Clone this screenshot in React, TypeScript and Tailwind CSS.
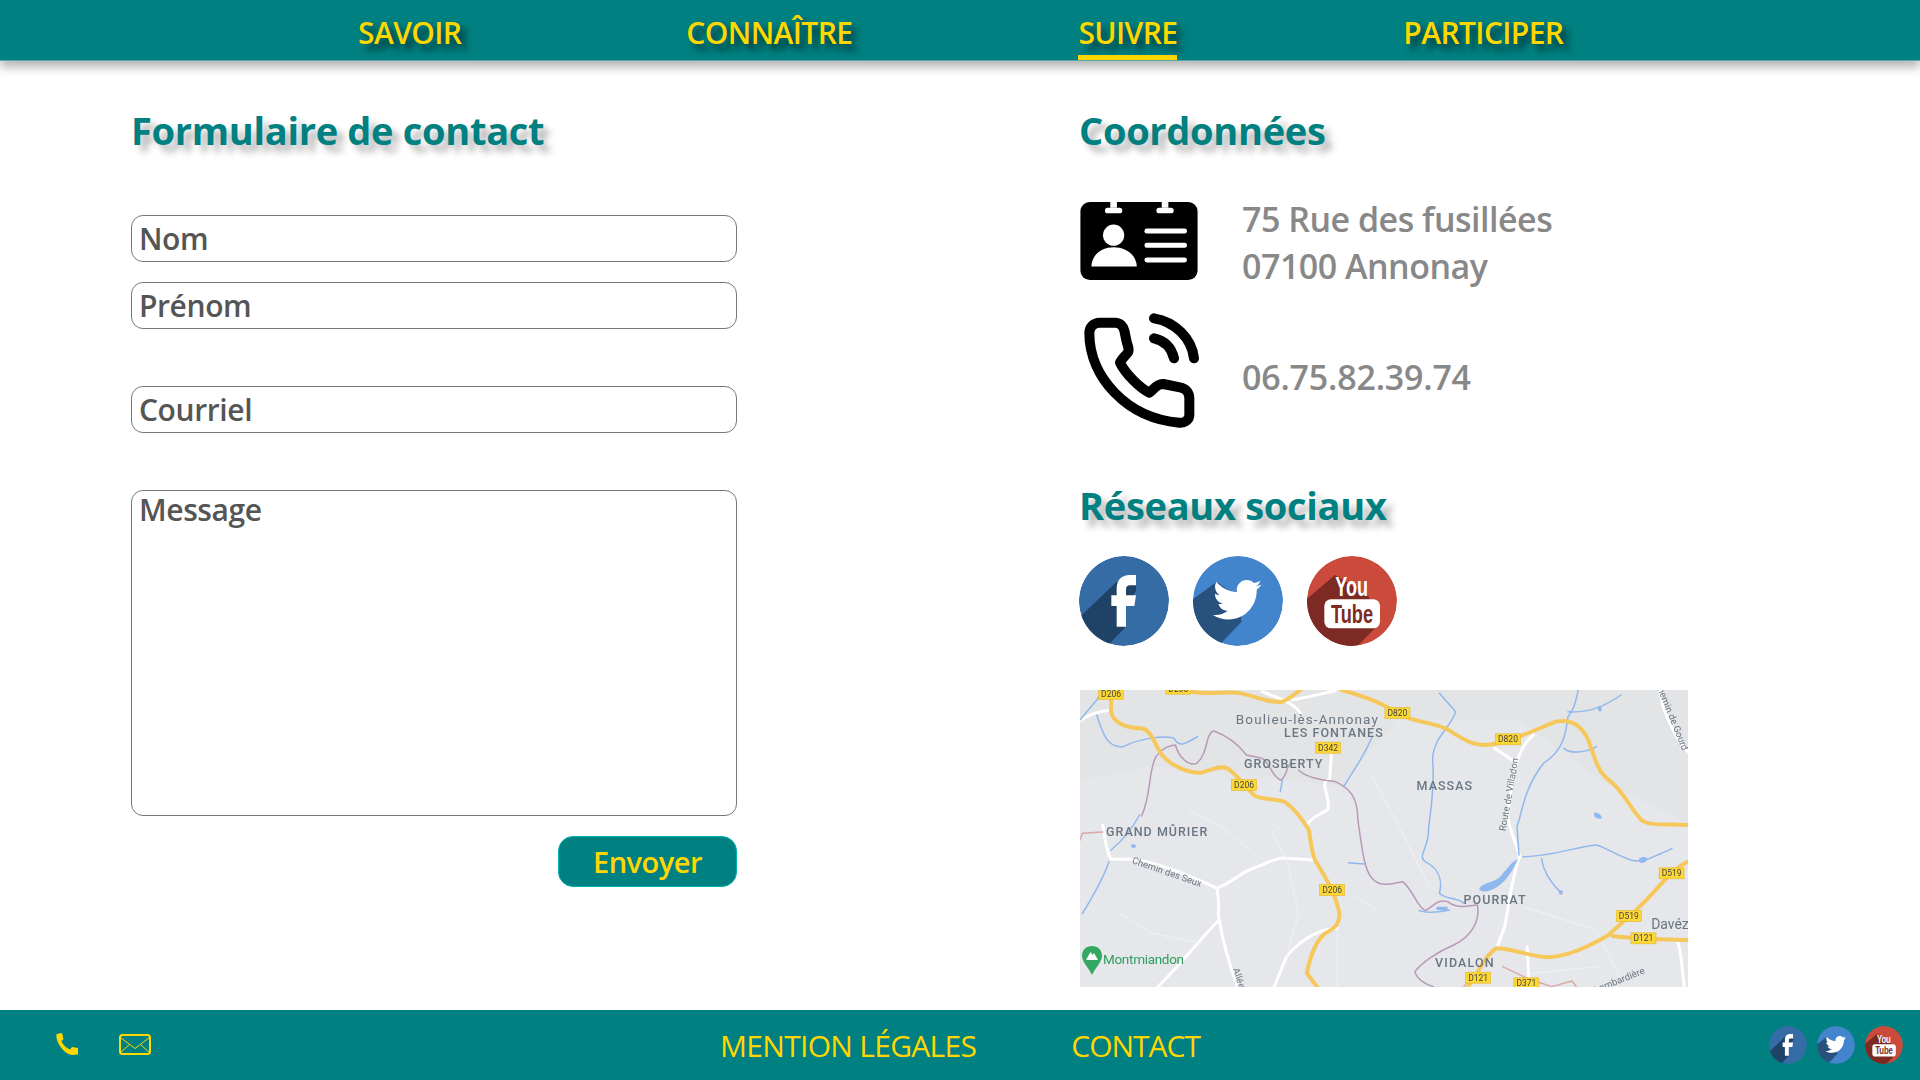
import React from 'react';
import { FaTwitter } from 'react-icons/fa';

const shadowNav = '[text-shadow:6px_6px_7px_rgba(0,0,0,0.6)]';
const font = "font-['Open_Sans','Noto_Sans',sans-serif]";

const mapX = (x: number) => (x - 24) * 0.408;
const mapY = (y: number) => (y - 30) / 3;

const shields: [string, number, number][] = [
  ['D206', 100, 42], ['D820', 802, 99], ['D820', 1073, 178], ['D342', 632, 203],
  ['D206', 426, 315], ['D206', 642, 630], ['D519', 1474, 580], ['D519', 1369, 708],
  ['D121', 1405, 775], ['D121', 1000, 893], ['D371', 1118, 910], ['D206', 265, 26],
];

// text, centre x, centre y, width, size, weight
const places: [string, number, number, number, number, number][] = [
  ['Boulieu-lès-Annonay', 580, 118, 348, 13.5, 400],
  ['LES FONTANES', 645, 158, 242, 12.5, 500],
  ['GROSBERTY', 522, 250, 192, 12.5, 500],
  ['MASSAS', 917, 317, 136, 12.5, 500],
  ['GRAND MÛRIER', 212, 455, 248, 12.5, 500],
  ['POURRAT', 1040, 658, 152, 12.5, 500],
  ['VIDALON', 966, 848, 144, 12.5, 500],
  ['Davéz', 1470, 732, 92, 14, 400],
];

const RoadMap = () => (
  <svg viewBox="0 0 608 297" className="block w-[608px] h-[297px] bg-[#e6e7ea] blur-[0.5px]">
    <g transform="translate(-9.8 -10) scale(0.408 0.3333)" fill="none" strokeLinecap="round" strokeLinejoin="round">
      <path fill="#e1e2e4" d="M24,30 L1514,30 L1514,430 L1300,300 L1100,120 L800,120 L660,320 L420,280 L200,260 L24,300 Z" opacity="0.7" />
      <g stroke="#ffffff" strokeWidth="3">
        <path vectorEffect="non-scaling-stroke" d="M24,122 C50,100 80,92 100,90" />
        <path vectorEffect="non-scaling-stroke" d="M470,35 C510,55 545,65 565,100 M545,60 C590,50 620,40 650,32" />
        <path vectorEffect="non-scaling-stroke" d="M640,225 L636,298 C608,305 638,345 632,388 C620,400 590,410 580,435" />
        <path vectorEffect="non-scaling-stroke" d="M80,435 C85,480 90,520 100,537 L145,538 C200,540 280,580 360,625 C390,610 410,590 430,575 C470,555 510,530 530,535 L595,540" />
        <path vectorEffect="non-scaling-stroke" d="M360,625 C368,680 360,700 365,720 C330,760 260,870 215,920" />
        <path vectorEffect="non-scaling-stroke" d="M365,720 C375,790 395,870 410,920" />
        <path vectorEffect="non-scaling-stroke" d="M1135,165 C1100,200 1085,260 1072,410 C1080,460 1095,500 1102,530 C1080,600 1075,680 1065,740 L1047,800" />
        <path vectorEffect="non-scaling-stroke" d="M1040,205 L1090,245 M1445,30 C1450,90 1480,170 1514,215" />
        <path vectorEffect="non-scaling-stroke" d="M655,745 C620,745 570,770 530,830 L500,920" />
        <path vectorEffect="non-scaling-stroke" d="M1120,800 L1125,920 M1490,790 C1500,830 1500,880 1505,920" />
      </g>
      <g stroke="#f1f2f4" strokeWidth="1">
        <path vectorEffect="non-scaling-stroke" d="M530,420 L495,460 L530,535 L560,700 L530,830 M700,650 L750,690 M1110,680 L1290,750 L1350,900 M655,745 L655,920 M1130,880 L1300,860" />
        <path vectorEffect="non-scaling-stroke" d="M290,390 L370,440 L450,520 M740,290 C790,400 840,520 880,620 M120,700 L200,760 L320,790" />
      </g>
      <g stroke="#8fb8ee" strokeWidth="1.5">
        <path vectorEffect="non-scaling-stroke" d="M65,105 C80,160 90,205 130,200 C170,175 230,165 255,175 C265,205 285,190 312,170" />
        <path vectorEffect="non-scaling-stroke" d="M24,120 L65,60 L80,30" />
        <path vectorEffect="non-scaling-stroke" d="M740,170 C720,230 690,280 670,320 M520,300 L515,335" />
        <path vectorEffect="non-scaling-stroke" d="M905,40 L945,95 C935,140 890,170 888,240 C895,320 880,420 878,450 C880,500 850,530 870,545 C895,560 915,590 905,640 C920,660 945,650 965,670" />
        <path vectorEffect="non-scaling-stroke" d="M1245,30 C1240,60 1235,90 1220,110 C1215,160 1210,210 1160,250 C1110,330 1110,390 1095,440 L1100,525" />
        <path vectorEffect="non-scaling-stroke" d="M1220,95 C1270,100 1310,80 1350,45 M1210,205 C1230,225 1270,215 1290,200" />
        <path vectorEffect="non-scaling-stroke" d="M1110,530 C1180,530 1240,500 1290,495 C1330,510 1370,555 1410,540 C1440,525 1460,515 1475,505" />
        <path vectorEffect="non-scaling-stroke" d="M1155,535 C1160,580 1180,610 1200,635 M682,548 L720,552" />
        <path vectorEffect="non-scaling-stroke" d="M100,510 C130,480 150,450 170,405 M95,545 C80,600 50,660 30,700" />
        <path vectorEffect="non-scaling-stroke" d="M855,692 C880,702 910,695 930,690" />
      </g>
      <path fill="#8fb8ee" d="M1098,538 C1085,565 1075,600 1045,622 C1030,635 1010,640 1002,628 C1005,612 1030,610 1050,595 C1070,570 1080,545 1098,538 Z" />
      <path fill="#8fb8ee" d="M1285,398 C1295,395 1305,410 1302,416 C1290,418 1280,408 1285,398 Z M1395,535 C1412,525 1418,535 1410,545 C1402,552 1392,550 1395,535 Z M1294,80 C1302,75 1306,88 1300,95 C1294,95 1292,88 1294,80 Z M1198,630 L1208,632 L1205,645 L1198,642 Z M150,492 L162,495 L158,505 L150,502 Z M898,680 L925,680 L925,692 L898,690 Z" />
      <g stroke="#b79ab8" strokeWidth="1.5">
        <path vectorEffect="non-scaling-stroke" d="M175,408 C200,340 190,280 210,230 C225,205 245,195 258,195 C265,230 290,260 310,250 C340,220 330,160 352,153 C380,165 410,190 432,225 L470,235 C490,250 495,290 515,300 C530,295 528,265 540,250" />
        <path vectorEffect="non-scaling-stroke" d="M560,270 C580,295 620,300 650,305 C685,325 705,350 705,420 C715,500 720,570 740,595 C760,625 790,610 815,605 C840,630 850,680 870,692 C890,680 900,655 925,665 C945,685 970,680 998,675 C1005,720 985,770 940,795 C900,815 860,850 845,875 C850,900 875,915 890,920" />
      </g>
      <g stroke="#d9a9a6" strokeWidth="1.5">
        <path vectorEffect="non-scaling-stroke" d="M24,480 L30,460 L80,456 M1060,860 L1120,895 L1180,920 L1230,903 L1240,920 M990,880 L965,920" />
      </g>
      <g stroke="#f6c85c" strokeWidth="4">
        <path vectorEffect="non-scaling-stroke" d="M100,40 L100,95 C105,130 140,145 175,145 C200,150 205,190 225,225 C250,260 290,280 320,278 C345,272 365,255 385,265 C405,280 430,320 450,345 C465,360 500,355 525,365 C550,385 570,420 585,450 C590,480 590,510 600,540 C625,590 650,640 660,700 C660,730 650,745 625,760 C595,790 585,850 580,880 L605,920" />
        <path vectorEffect="non-scaling-stroke" d="M300,35 C340,45 370,35 410,38 C450,45 480,70 520,65 C540,55 550,40 565,30" />
        <path vectorEffect="non-scaling-stroke" d="M665,30 C710,45 750,60 790,90 C830,125 880,125 920,145 C950,165 975,195 1020,195 C1070,190 1130,155 1190,125 C1230,115 1255,140 1270,180 C1285,230 1290,270 1320,300 C1355,330 1375,390 1400,420 C1420,440 1470,430 1514,435" />
        <path vectorEffect="non-scaling-stroke" d="M1514,545 C1480,565 1450,610 1420,650 C1390,690 1350,730 1320,765 C1270,800 1220,830 1170,832 C1130,830 1080,805 1045,805 C1020,820 1000,880 975,920" />
        <path vectorEffect="non-scaling-stroke" d="M1330,768 C1390,778 1450,778 1514,780" />
      </g>
    </g>
    {shields.map(([label, x, y], i) => (
      <g key={i}>
        <rect x={mapX(x) - 12.5} y={mapY(y) - 5.5} width="25" height="11" fill="#fdd734" stroke="#e3b62e" strokeWidth="0.6" />
        <text x={mapX(x)} y={mapY(y) + 3} textAnchor="middle" fontSize="8.5" fill="#444" fontFamily="Roboto, sans-serif">{label}</text>
      </g>
    ))}
    {places.map(([label, x, y, w, size, weight], i) => (
      <text
        key={i}
        x={mapX(x)}
        y={mapY(y) + 4.5}
        textAnchor="middle"
        textLength={w * 0.408}
        fontSize={size}
        fontWeight={weight}
        fill="#6a7682"
        fontFamily="Roboto, sans-serif"
      >
        {label}
      </text>
    ))}
    <text transform="translate(86 185) rotate(19)" textAnchor="middle" fontSize="9.5" fill="#6a7682" fontFamily="Roboto, sans-serif">Chemin des Seux</text>
    <text transform="translate(432 105) rotate(-80)" textAnchor="middle" fontSize="9.5" fill="#6a7682" fontFamily="Roboto, sans-serif">Route de Villadon</text>
    <text transform="translate(590 30) rotate(68)" textAnchor="middle" fontSize="9.5" fill="#6a7682" fontFamily="Roboto, sans-serif">hemin de Gourd</text>
    <text transform="translate(156 289) rotate(72)" textAnchor="middle" fontSize="9.5" fill="#6a7682" fontFamily="Roboto, sans-serif">Allée</text>
    <text transform="translate(536 295) rotate(-22)" textAnchor="middle" fontSize="9.5" fill="#6a7682" fontFamily="Roboto, sans-serif">la Lombardière</text>
    <path d="M12 256 C6 256 2 260 2 266 C2 272 9 278 12 285 C15 278 22 272 22 266 C22 260 18 256 12 256 Z" fill="#34a862" />
    <path d="M6 270 L10.500 262 L12.500 265 L14 263 L18 270 Z" fill="#fff" />
    <text x="23" y="274" fontSize="13.500" fill="#2f9e5f" fontFamily="Roboto, sans-serif" textLength="81">Montmiandon</text>
  </svg>
);

const Facebook = ({ size }: { size: number }) => (
  <svg viewBox="0 0 270 270" width={size} height={size} className="block rounded-full shrink-0">
    <circle cx="135" cy="135" r="135" fill="#366ca6" />
    <path d="M-10,195 L113,77 L171,77 L171,105 L141,150 L141,212 L80,275 L-10,275 Z" fill="#1f4267" />
    <path d="M171,57 L171,88 L155,88 C145,88 141,92 141,102 L141,118 L171,118 L166,150 L141,150 L141,212 L113,212 L113,150 L97,150 L97,118 L113,118 L113,98 C113,72 128,57 152,57 Z" fill="#fff" />
  </svg>
);

const Twitter = ({ size }: { size: number }) => (
  <svg viewBox="0 0 270 270" width={size} height={size} className="block rounded-full shrink-0">
    <circle cx="135" cy="135" r="135" fill="#4285cd" />
    <path d="M-10,137 L71,77 L130,120 L146,197 L84,262 L-10,275 Z" fill="#28517e" />
    <FaTwitter x="60" y="58" size={146} color="#fff" />
  </svg>
);

const Youtube = ({ size }: { size: number }) => (
  <svg viewBox="0 0 270 270" width={size} height={size} className="block rounded-full shrink-0">
    <circle cx="135" cy="135" r="135" fill="#ca4a3b" />
    <path d="M-10,137 L84,57 L184,120 L219,202 L149,272 L-10,275 Z" fill="#7c2a23" />
    <text x="134" y="120" textAnchor="middle" fontSize="84" fontWeight="700" fill="#fff" fontFamily="'Liberation Sans', sans-serif" textLength="98" lengthAdjust="spacingAndGlyphs">You</text>
    <rect x="52" y="130" width="167" height="87" rx="20" fill="#fff" />
    <text x="135" y="202" textAnchor="middle" fontSize="76" fontWeight="700" fill="#7c2a23" fontFamily="'Liberation Sans', sans-serif" textLength="126" lengthAdjust="spacingAndGlyphs">Tube</text>
  </svg>
);

const IdCard = () => (
  <svg viewBox="60 95 353 235" className="block w-[118px] h-[78px]">
    <rect x="60" y="95" width="353" height="235" rx="28" fill="#000" />
    <path d="M150,95 H170 V112 H150 Z M305,95 H325 V112 H305 Z" fill="#fff" />
    <rect x="134" y="112" width="52" height="17" rx="8" fill="#fff" />
    <rect x="289" y="112" width="52" height="17" rx="8" fill="#fff" />
    <circle cx="160" cy="195" r="32" fill="#fff" />
    <path d="M93,289 C95,252 125,231 160,231 C195,231 228,252 230,289 Z" fill="#fff" />
    <rect x="253" y="175" width="128" height="15" rx="7" fill="#fff" />
    <rect x="253" y="218" width="128" height="15" rx="7" fill="#fff" />
    <rect x="253" y="262" width="128" height="15" rx="7" fill="#fff" />
  </svg>
);

const BigPhone = () => (
  <svg viewBox="60 420 369 366" className="block w-[123px] h-[122px]" fill="none" stroke="#000" strokeWidth="30" strokeLinecap="round" strokeLinejoin="round">
    <path d="M120,458 L165,458 C180,458 190,468 193,482 L200,515 C203,528 208,535 205,545 C200,555 185,565 180,578 C195,610 240,655 268,668 C280,660 290,640 310,642 L360,652 C378,655 388,668 388,685 L388,735 C388,750 372,760 358,758 C200,745 88,620 88,490 C88,472 100,458 120,458 Z" />
    <path d="M282,445 C345,455 395,505 402,565" />
    <path d="M282,505 C315,512 335,535 342,565" />
  </svg>
);

const Heading = ({ children }: { children: React.ReactNode }) => (
  <h2 className="text-[38px] leading-[46px] font-bold tracking-[-0.3px] text-[#008080] [text-shadow:7px_7px_7px_rgba(0,0,0,0.3)]">{children}</h2>
);

const fieldClass =
  'block w-full border border-[#777] rounded-[12px] px-[7px] bg-white outline-none text-[30px] font-semibold tracking-[-0.4px] text-[#555] placeholder:text-[#555] placeholder:opacity-100';

export default function App() {
  return (
    <div className={`h-screen w-full flex flex-col bg-white overflow-hidden ${font}`}>
      <header className="relative z-10 h-[61px] shrink-0 bg-[#008080] border-b border-[#5fa8a8] shadow-[0_6px_10px_rgba(0,0,0,0.3)] flex items-stretch text-[#ffd700] text-[30px] font-semibold tracking-[-0.6px]">
        <a className={`ml-[358px] mt-[12px] h-[48px] leading-[42px] ${shadowNav}`}>SAVOIR</a>
        <a className={`ml-[225px] mt-[12px] h-[48px] leading-[42px] ${shadowNav}`}>CONNAÎTRE</a>
        <a className={`ml-[226px] mt-[12px] h-[48px] leading-[42px] border-b-[5px] border-[#ffd700] ${shadowNav}`}>SUIVRE</a>
        <a className={`ml-[226px] mt-[12px] h-[48px] leading-[42px] ${shadowNav}`}>PARTICIPER</a>
      </header>

      <main className="flex-1 flex pt-[46px]">
        <section className="ml-[131px] w-[606px]">
          <Heading>Formulaire de contact</Heading>
          <form className="mt-[62px] flex flex-col">
            <input placeholder="Nom" className={`${fieldClass} h-[47px]`} />
            <input placeholder="Prénom" className={`${fieldClass} h-[47px] mt-[20px]`} />
            <input placeholder="Courriel" className={`${fieldClass} h-[47px] mt-[57px]`} />
            <textarea placeholder="Message" className={`${fieldClass} h-[326px] mt-[57px] resize-none leading-[38px]`} />
            <button
              type="button"
              className="self-end mt-[20px] w-[179px] h-[51px] rounded-[15px] border border-[#00b3b3] bg-[#008080] text-[#ffd700] text-[29px] font-semibold tracking-[-0.5px] leading-none"
            >
              Envoyer
            </button>
          </form>
        </section>

        <section className="ml-[342px] w-[620px]">
          <Heading>Coordonnées</Heading>
          <div className="mt-[43px] flex text-[34px] leading-[47px] font-semibold tracking-[-0.5px] text-[#888]">
            <div className="w-[163px] pl-px pt-[6px] shrink-0"><IdCard /></div>
            <p>75 Rue des fusillées<br />07100 Annonay</p>
          </div>
          <div className="mt-[20px] flex items-center text-[34px] leading-[47px] font-semibold tracking-[-0.2px] text-[#888]">
            <div className="w-[163px] pl-px shrink-0"><BigPhone /></div>
            <p className="pt-3">06.75.82.39.74</p>
          </div>
          <div className="mt-[50px]"><Heading>Réseaux sociaux</Heading></div>
          <div className="mt-[28px] flex gap-[24px]">
            <Facebook size={90} />
            <Twitter size={90} />
            <Youtube size={90} />
          </div>
          <div className="mt-[44px] ml-px"><RoadMap /></div>
        </section>
      </main>

      <footer className="h-[70px] shrink-0 bg-[#008080] flex items-center text-[#ffd700] text-[30px] tracking-[-0.7px]">
        <svg viewBox="0 0 22 22" className="ml-[56px] mb-[2px] w-[22px] h-[22px]" fill="#ffd700">
          <path d="M0.500,1 L6,0 L7.500,6 L5.500,8 C7,12 10,15 14,16.500 L16,14 L22,15 L22,21.500 L16,22 C8,20.500 2,12 0.500,5 Z" />
        </svg>
        <svg viewBox="0 0 32 21" className="ml-[41px] mb-[2px] w-[32px] h-[21px]" fill="none" stroke="#ffd700">
          <rect x="1" y="1" width="30" height="19" rx="2.500" strokeWidth="2" />
          <path d="M1.500,3.500 L16,14.500 L30.500,3.500 M1.500,18.500 L10.500,10.500 M30.500,18.500 L21.500,10.500" strokeWidth="1" />
        </svg>
        <a className="ml-[569px] pt-px">MENTION LÉGALES</a>
        <a className="ml-[95px] pt-px tracking-[-1px]">CONTACT</a>
        <div className="ml-auto mr-[17px] flex gap-[10px]">
          <Facebook size={38} />
          <Twitter size={38} />
          <Youtube size={38} />
        </div>
      </footer>
    </div>
  );
}
